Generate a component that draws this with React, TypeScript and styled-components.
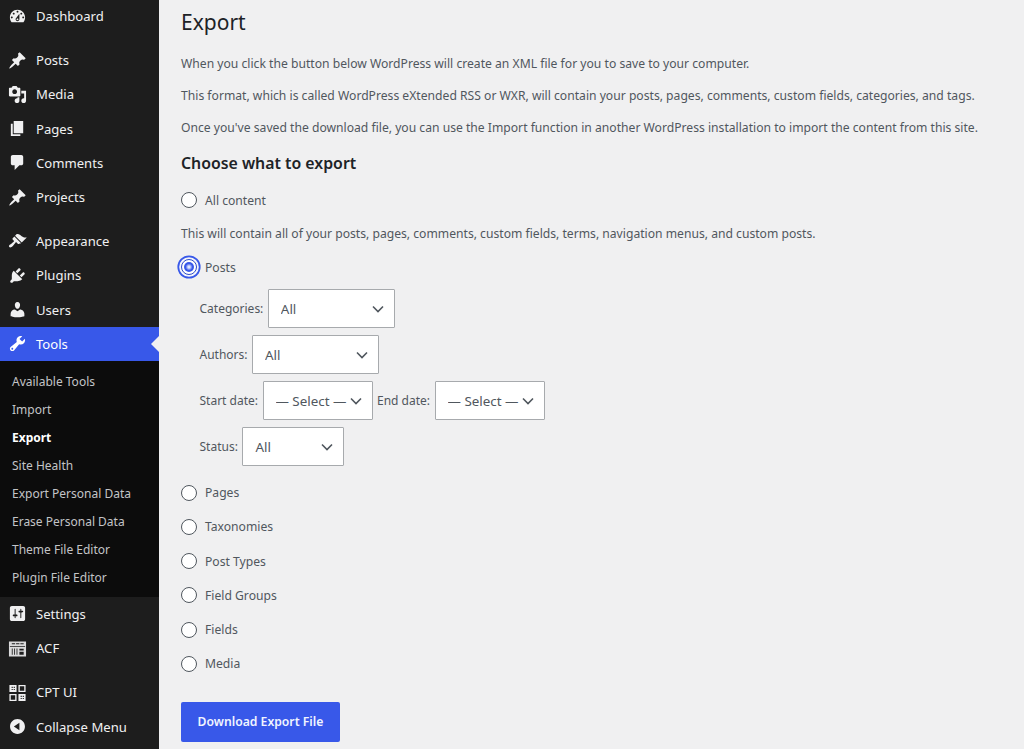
import React from 'react';
import styled, { createGlobalStyle } from 'styled-components';

const GlobalStyle = createGlobalStyle`
  html, body {
    margin: 0;
    padding: 0;
    height: 100%;
    overflow: hidden;
    background: #f0f0f1;
  }
  body {
    font-family: "Noto Sans", "Open Sans", sans-serif;
    font-size: 12.15px;
    color: #50575e;
  }
`;

const chevron =
  "url(\"data:image/svg+xml,%3Csvg xmlns='http://www.w3.org/2000/svg' viewBox='0 0 12 8'%3E%3Cpath d='M1 1.5l5 5 5-5' fill='none' stroke='%2350575e' stroke-width='1.6'/%3E%3C/svg%3E\")";

const Layout = styled.div`
  display: flex;
  width: 1024px;
  height: 749px;
  overflow: hidden;
`;

const Sidebar = styled.nav`
  flex: 0 0 159px;
  background: #1d1d1d;
  color: #f0f0f1;
  height: 749px;
  overflow: hidden;
`;

const MenuList = styled.ul`
  list-style: none;
  margin: -1px 0 0;
  padding: 0;
`;

const MenuItem = styled.li<{ $active?: boolean; $gapBefore?: boolean }>`
  position: relative;
  display: flex;
  align-items: center;
  height: 34.2px;
  margin-top: ${({ $gapBefore }) => ($gapBefore ? '10px' : '0')};
  padding-left: 8px;
  gap: 9px;
  font-size: 13.1px;
  background: ${({ $active }) => ($active ? '#3858e9' : 'transparent')};
  color: ${({ $active }) => ($active ? '#fff' : '#f0f0f1')};

  ${({ $active }) =>
    $active &&
    `
    &::after {
      content: '';
      position: absolute;
      right: 0;
      top: 50%;
      margin-top: -8px;
      border: 8px solid transparent;
      border-right-color: #f0f0f1;
      border-left-width: 0;
    }
  `}
`;

const IconBox = styled.svg`
  flex: 0 0 19px;
  width: 19px;
  height: 19px;
  fill: currentColor;
`;

const SubMenu = styled.ul`
  list-style: none;
  margin: 0;
  padding: 7px 0 5px;
  background: #0c0c0c;
`;

const SubItem = styled.li<{ $current?: boolean }>`
  height: 28px;
  line-height: 28px;
  padding-left: 12px;
  font-size: 12px;
  font-weight: ${({ $current }) => ($current ? 700 : 400)};
  color: ${({ $current }) => ($current ? '#fff' : '#c3c4c7')};
`;

const Main = styled.main`
  flex: 1;
  padding: 0 0 0 22px;
  min-width: 0;
`;

const Title = styled.h1`
  margin: 6px 0 0;
  font-size: 21px;
  line-height: 32px;
  font-weight: 400;
  color: #1d2327;
`;

const Para = styled.p`
  margin: 0;
  height: 32px;
  line-height: 32px;
  white-space: nowrap;
`;

const Intro = styled.div`
  margin-top: 10px;
`;

const SectionTitle = styled.h2`
  margin: 0 0 1px;
  font-size: 15.85px;
  line-height: 38px;
  font-weight: 600;
  color: #1d2327;
`;

const RadioRow = styled.label`
  display: flex;
  align-items: center;
  gap: 8px;
  height: 34.25px;
`;

const Radio = styled.input.attrs({ type: 'radio' })`
  appearance: none;
  flex: 0 0 16px;
  width: 16px;
  height: 16px;
  margin: 0;
  border-radius: 50%;
  border: 1.4px solid #50575e;
  background: #fff;
  box-sizing: border-box;
  display: grid;
  place-items: center;

  &:checked {
    border: 1.6px solid #2f4bc9;
    box-shadow: 0 0 0 1.8px #f4f5fb, 0 0 0 3.6px #3858e9;
  }

  &:checked::before {
    content: '';
    width: 10px;
    height: 10px;
    border-radius: 50%;
    background: radial-gradient(circle, #dfe5ff 0 1px, #3858e9 3.5px);
  }
`;

const Hint = styled.p`
  margin: 0;
  height: 33px;
  line-height: 34px;
`;

const Filters = styled.div`
  display: flex;
  flex-direction: column;
  gap: 7px;
  margin: 4.6px 0 9.4px 18.500px;
`;

const FilterRow = styled.div`
  display: flex;
  align-items: center;
  gap: 4.5px;
  font-size: 12px;
`;

const Select = styled.select<{ $width: number }>`
  appearance: none;
  width: ${({ $width }) => $width}px;
  height: 39px;
  margin: 0;
  padding: 0 22px 0 12px;
  font-family: inherit;
  font-size: 13.4px;
  color: #50575e;
  background: #fff ${chevron} no-repeat right 10px center / 12px 8px;
  border: 1px solid #a7aaad;
  border-radius: 1px;
  box-sizing: border-box;
`;

const DownloadButton = styled.button`
  display: block;
  width: 159px;
  height: 40px;
  margin-top: 21px;
  padding: 0;
  border: 0;
  border-radius: 2px;
  background: #3858e9;
  color: #f0f4ff;
  font-family: inherit;
  font-size: 12.2px;
  font-weight: 600;
`;

const paths: Record<string, string> = {
  dashboard:
    'M3.76 16h12.48c1.1-1.37 1.76-3.11 1.76-5 0-4.42-3.58-8-8-8s-8 3.58-8 8c0 1.89.66 3.63 1.76 5zM10 4c.55 0 1 .45 1 1s-.45 1-1 1-1-.45-1-1 .45-1 1-1zM6 6c.55 0 1 .45 1 1s-.45 1-1 1-1-.45-1-1 .45-1 1-1zm8 0c.55 0 1 .45 1 1s-.45 1-1 1-1-.45-1-1 .45-1 1-1zm-5.37 5.55L12 7v6c0 1.1-.9 2-2 2s-2-.9-2-2c0-.57.24-1.08.63-1.45zM4 10c.55 0 1 .45 1 1s-.45 1-1 1-1-.45-1-1 .45-1 1-1zm12 0c.55 0 1 .45 1 1s-.45 1-1 1-1-.45-1-1 .45-1 1-1zm-5 3c0-.55-.45-1-1-1s-1 .45-1 1 .45 1 1 1 1-.45 1-1z',
  post: 'M10.44 3.02l1.82-1.82 6.36 6.35-1.83 1.82c-1.05-.68-2.48-.57-3.41.36l-.75.75c-.92.93-1.04 2.35-.35 3.41l-1.83 1.82-2.41-2.41-2.8 2.79c-.42.42-3.38 2.71-3.8 2.29s1.86-3.39 2.28-3.81l2.79-2.79L4.1 9.36l1.83-1.82c1.05.69 2.48.57 3.4-.36l.75-.75c.93-.92 1.05-2.35.36-3.41z',
  media:
    'M13 11V4c0-.55-.45-1-1-1h-1.67L9 1H5L3.67 3H2c-.55 0-1 .45-1 1v7c0 .55.45 1 1 1h10c.55 0 1-.45 1-1zM7 4.5c1.38 0 2.5 1.12 2.5 2.5S8.38 9.5 7 9.5 4.5 8.38 4.5 7 5.62 4.5 7 4.5zM14 6h5v10.5c0 1.38-1.12 2.5-2.5 2.5S14 17.88 14 16.5s1.12-2.5 2.5-2.5c.17 0 .34.02.5.05V9h-3V6zm-4 8.05V13h2v3.5c0 1.38-1.12 2.5-2.5 2.5S7 17.88 7 16.5 8.12 14 9.5 14c.17 0 .34.02.5.05z',
  page: 'M6 15V2h10v13H6zm-1 1h8v2H3V5h2v11z',
  comments:
    'M5 2h9c1.1 0 2 .9 2 2v7c0 1.1-.9 2-2 2h-2l-5 5v-5H5c-1.1 0-2-.9-2-2V4c0-1.1.9-2 2-2z',
  appearance:
    'M14.48 11.06L7.41 3.99l1.5-1.5c.5-.56 2.3-.47 3.51.32 1.21.8 1.43 1.28 2.91 2.1 1.18.64 2.45 1.26 4.45.85zm-.71.71L6.7 4.7 4.93 6.47c-.39.39-.39 1.02 0 1.41l1.06 1.06c.39.39.39 1.03 0 1.42-.6.6-1.43 1.11-2.21 1.69-.35.26-.7.53-1.01.84C1.43 13.23.4 14.85 1.37 15.82c.97.97 2.59-.06 3.93-1.4.31-.31.58-.66.84-1.01.58-.78 1.09-1.61 1.69-2.21.39-.39 1.03-.39 1.42 0l1.06 1.06c.39.39 1.02.39 1.41 0z',
  plugins:
    'M13.11 4.36L9.87 7.6 8 5.73l3.24-3.24c.35-.34 1.05-.2 1.56.32.52.51.66 1.21.31 1.55zm-8 1.77l.91-1.12 9.01 9.01-1.19.84c-.71.71-2.63 1.16-3.82 1.16H6.14L4.9 17.26c-.59.59-1.54.59-2.12 0-.59-.58-.59-1.53 0-2.12l1.24-1.24v-3.88c0-1.13.4-3.19 1.09-3.89zm7.26 3.97l3.24-3.24c.34-.35 1.04-.21 1.55.31.52.51.66 1.21.31 1.55l-3.24 3.25z',
  users:
    'M10 9.25c-2.27 0-2.73-3.44-2.73-3.44C7 4.02 7.82 2 9.97 2c2.16 0 2.98 2.02 2.71 3.81 0 0-.41 3.44-2.68 3.44zm0 2.57L12.72 10c2.39 0 4.52 2.33 4.52 4.53v2.49s-3.65 1.13-7.24 1.13c-3.65 0-7.24-1.13-7.24-1.13v-2.49c0-2.25 1.94-4.48 4.47-4.48z',
  tools:
    'M16.68 9.77c-1.34 1.34-3.3 1.67-4.95.99l-5.41 6.52c-.99.99-2.59.99-3.58 0s-.99-2.59 0-3.57l6.52-5.42c-.68-1.65-.35-3.61.99-4.95 1.28-1.28 3.12-1.62 4.72-1.06l-2.89 2.89 2.82 2.82 2.86-2.87c.53 1.58.18 3.39-1.08 4.65zM3.81 16.21c.4.39 1.04.39 1.43 0 .4-.4.4-1.04 0-1.43-.39-.4-1.03-.4-1.43 0-.39.39-.39 1.03 0 1.43z',
  settings:
    'M18 16V4c0-1.1-.9-2-2-2H4c-1.1 0-2 .9-2 2v12c0 1.1.9 2 2 2h12c1.1 0 2-.9 2-2zM8 11h1c.55 0 1 .45 1 1s-.45 1-1 1H8v1.5c0 .28-.22.5-.5.5s-.5-.22-.5-.5V13H6c-.55 0-1-.45-1-1s.45-1 1-1h1V5.5c0-.28.22-.5.5-.5s.5.22.5.5V11zm5-2h-1c-.55 0-1-.45-1-1s.45-1 1-1h1V5.5c0-.28.22-.5.5-.5s.5.22.5.5V7h1c.55 0 1 .45 1 1s-.45 1-1 1h-1v5.5c0 .28-.22.5-.5.5s-.5-.22-.5-.5V9z',
  collapse:
    'M10 2.16c4.33 0 7.84 3.51 7.84 7.84s-3.51 7.84-7.84 7.84S2.16 14.33 2.16 10 5.71 2.16 10 2.16zm2 11.72V6.12L6.18 9.97z',
};

const MenuIcon = ({ name }: { name: string }) => {
  if (name === 'acf') {
    return (
      <IconBox viewBox="0 0 20 20">
        <path
          fillRule="evenodd"
          opacity="0.9"
          d="M1 2.500h18v16H1zM2 7.500v.8h16v-.8zM4 4.500v1h3.500v-1zM8.500 4.500v1h3.500v-1zM13 4.500v1h3.500v-1zM4 10v6.500h.9V10zM6.500 10v6.500h.9V10zM9 10v6.500h.9V10zM12 10.200v2h4.500v-2zM12 13.500v3h4.500v-3z"
        />
      </IconBox>
    );
  }
  if (name === 'cpt') {
    return (
      <IconBox viewBox="0 0 20 20">
        <path fillRule="evenodd" d="M1.500 2h7.500v7.500H1.500zM3.800 4v1.200h1.200V4zM6 6.200v1.200h1.200V6.200zM3.800 6.200v1.200h1.200V6.200zM6 4v1.200h1.200V4z" />
        <path fillRule="evenodd" d="M11 2h7.500v7.500H11zM12.400 3.400v4.700h4.700V3.400zM1.500 11.500h7.500V19H1.500zM2.900 12.900v4.700h4.700v-4.700z" />
        <path fillRule="evenodd" d="M11 11.500h7.500V19H11zM13.300 13.500v1.200h1.200v-1.200zM15.500 15.700v1.200h1.200v-1.200zM13.300 15.700v1.200h1.200v-1.200zM15.500 13.500v1.200h1.200v-1.200z" />
      </IconBox>
    );
  }
  return (
    <IconBox viewBox="0 0 20 20">
      <path d={paths[name]} />
    </IconBox>
  );
};

const topMenu = [
  { icon: 'dashboard', label: 'Dashboard' },
  { icon: 'post', label: 'Posts', gap: true },
  { icon: 'media', label: 'Media' },
  { icon: 'page', label: 'Pages' },
  { icon: 'comments', label: 'Comments' },
  { icon: 'post', label: 'Projects' },
  { icon: 'appearance', label: 'Appearance', gap: true },
  { icon: 'plugins', label: 'Plugins' },
  { icon: 'users', label: 'Users' },
];

const toolLinks = [
  'Available Tools',
  'Import',
  'Export',
  'Site Health',
  'Export Personal Data',
  'Erase Personal Data',
  'Theme File Editor',
  'Plugin File Editor',
];

const bottomMenu = [
  { icon: 'settings', label: 'Settings' },
  { icon: 'acf', label: 'ACF' },
  { icon: 'cpt', label: 'CPT UI', gap: true },
  { icon: 'collapse', label: 'Collapse Menu' },
];

const otherTypes = ['Pages', 'Taxonomies', 'Post Types', 'Field Groups', 'Fields', 'Media'];

export default function App() {
  return (
    <Layout>
      <GlobalStyle />
      <Sidebar>
        <MenuList>
          {topMenu.map((item) => (
            <MenuItem key={item.label} $gapBefore={item.gap}>
              <MenuIcon name={item.icon} />
              {item.label}
            </MenuItem>
          ))}
          <MenuItem $active>
            <MenuIcon name="tools" />
            Tools
          </MenuItem>
          <SubMenu>
            {toolLinks.map((link) => (
              <SubItem key={link} $current={link === 'Export'}>
                {link}
              </SubItem>
            ))}
          </SubMenu>
          {bottomMenu.map((item) => (
            <MenuItem key={item.label} $gapBefore={item.gap}>
              <MenuIcon name={item.icon} />
              {item.label}
            </MenuItem>
          ))}
        </MenuList>
      </Sidebar>
      <Main>
        <Title>Export</Title>
        <Intro>
          <Para>When you click the button below WordPress will create an XML file for you to save to your computer.</Para>
          <Para>This format, which is called WordPress eXtended RSS or WXR, will contain your posts, pages, comments, custom fields, categories, and tags.</Para>
          <Para>Once you've saved the download file, you can use the Import function in another WordPress installation to import the content from this site.</Para>
        </Intro>
        <SectionTitle>Choose what to export</SectionTitle>
        <RadioRow>
          <Radio name="content" />
          All content
        </RadioRow>
        <Hint>This will contain all of your posts, pages, comments, custom fields, terms, navigation menus, and custom posts.</Hint>
        <RadioRow>
          <Radio name="content" defaultChecked />
          Posts
        </RadioRow>
        <Filters>
          <FilterRow>
            Categories:
            <Select $width={127}>
              <option>All</option>
            </Select>
          </FilterRow>
          <FilterRow>
            Authors:
            <Select $width={127}>
              <option>All</option>
            </Select>
          </FilterRow>
          <FilterRow>
            Start date:
            <Select $width={110}>
              <option>— Select —</option>
            </Select>
            End date:
            <Select $width={110}>
              <option>— Select —</option>
            </Select>
          </FilterRow>
          <FilterRow>
            Status:
            <Select $width={102}>
              <option>All</option>
            </Select>
          </FilterRow>
        </Filters>
        {otherTypes.map((type) => (
          <RadioRow key={type}>
            <Radio name="content" />
            {type}
          </RadioRow>
        ))}
        <DownloadButton type="button">Download Export File</DownloadButton>
      </Main>
    </Layout>
  );
}
